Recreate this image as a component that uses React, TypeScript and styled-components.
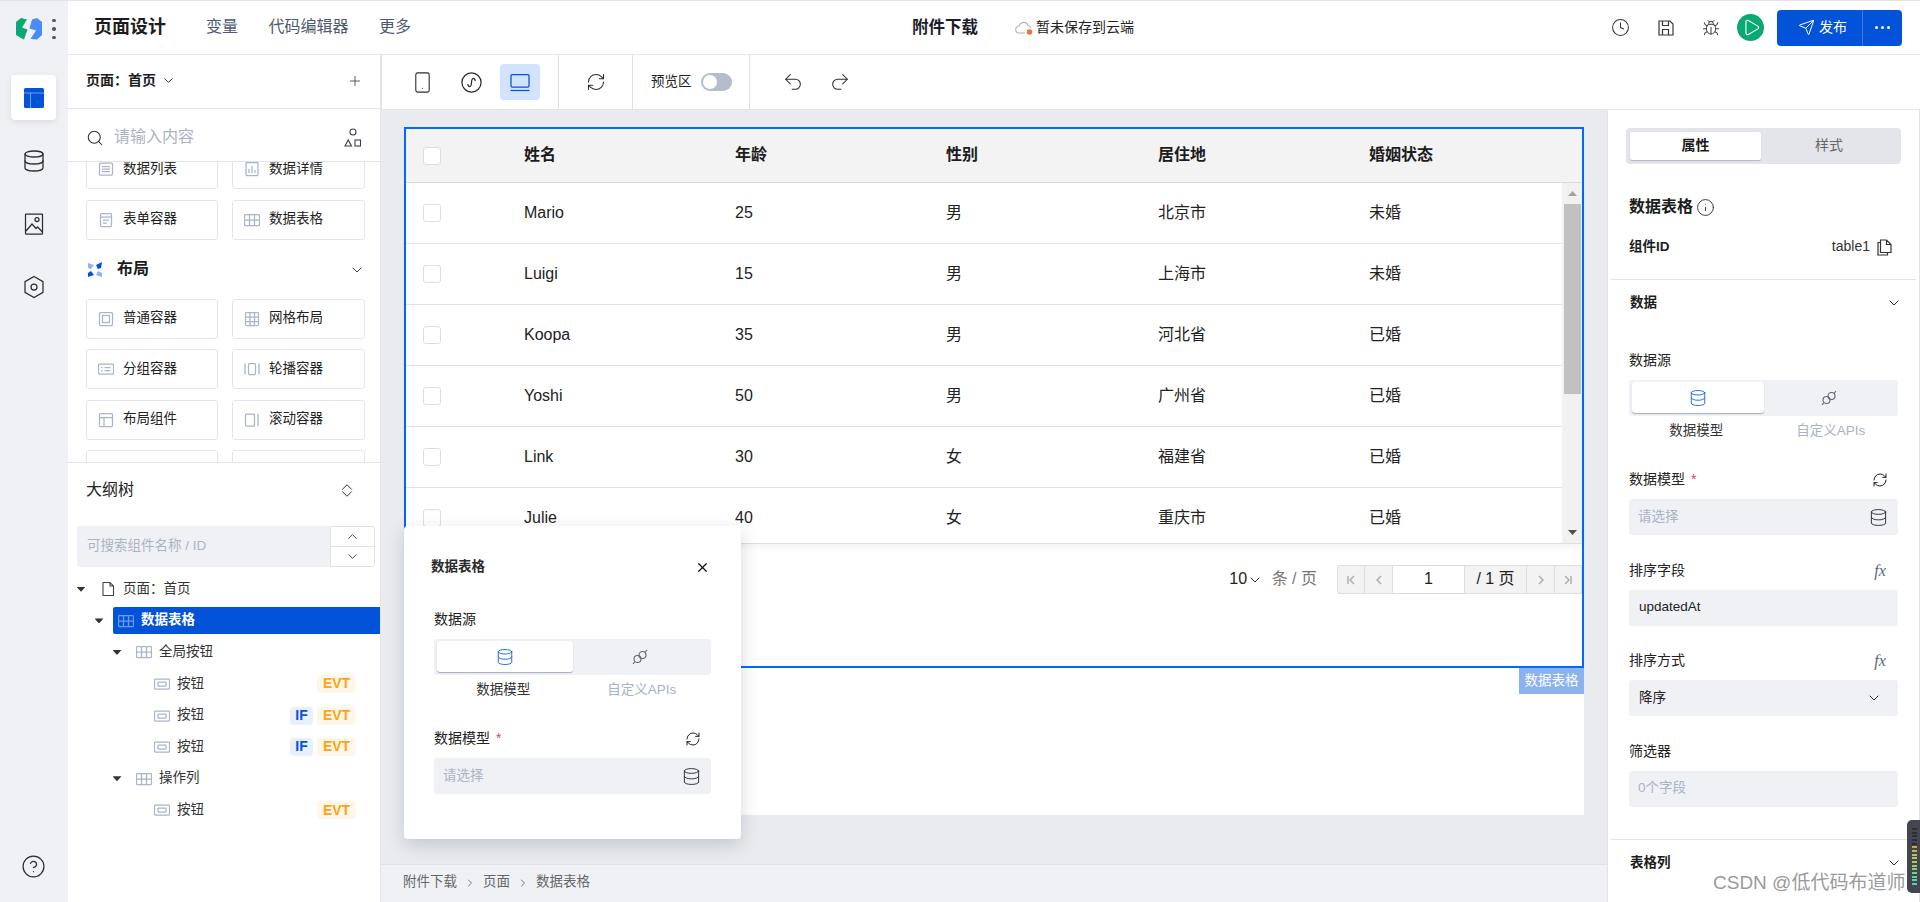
import React from 'react'
import styled, { createGlobalStyle } from 'styled-components'
import {
    Bug,
    ChevronDown,
    ChevronRight,
    ChevronUp,
    CircleHelp,
    Clock,
    Database,
    Info,
    Play,
    Plus,
    RefreshCw,
    Redo2,
    Search,
    Send,
    Smartphone,
    Undo2,
    X,
} from 'lucide-react'

const GlobalStyle = createGlobalStyle`
    html, body {
        margin: 0;
        height: 100%;
        background: #fff;
        font-family: "Liberation Sans", "Noto Sans CJK SC", sans-serif;
        line-height: 1.4;
        color: #1c1c1c;
    }
    * { box-sizing: border-box; }
`

const Root = styled.div`
    position: relative;
    display: flex;
    width: 1920px;
    height: 902px;
    overflow: hidden;
    border-top: 1px solid #e3e4e8;
`

const Rail = styled.aside`
    flex: 0 0 68px;
    display: flex;
    flex-direction: column;
    background: #f0f1f5;
`

const LogoRow = styled.div`
    height: 53px;
    padding: 3px 0 0 16px;
    display: flex;
    align-items: center;
    gap: 10px;
    margin-bottom: 21px;
`

const Dots = styled.div`
    display: flex;
    flex-direction: column;
    gap: 5px;
    i {
        width: 3.5px;
        height: 3.5px;
        border-radius: 50%;
        background: #4d5a70;
    }
`

const RailItem = styled.div<{ $active?: boolean }>`
    width: 45px;
    height: 45px;
    margin: 0 0 18px 11px;
    display: flex;
    align-items: center;
    justify-content: center;
    border-radius: 4px;
    background: ${(p) => (p.$active ? '#fff' : 'transparent')};
    box-shadow: ${(p) => (p.$active ? '0 2px 6px rgba(30, 40, 70, 0.1)' : 'none')};
    color: #2a2d34;
`

const RailHelp = styled(RailItem)`
    margin-top: auto;
    margin-bottom: 13px;
`

const Main = styled.div`
    flex: 1;
    min-width: 0;
    display: flex;
    flex-direction: column;
`

const Header = styled.header`
    flex: 0 0 54px;
    display: flex;
    align-items: center;
    border-bottom: 1px solid #e6e7eb;
`

const HeaderLeft = styled.div`
    flex: 0 0 844px;
    padding-left: 26px;
    display: flex;
    align-items: center;
`

const AppTitle = styled.div`
    font-size: 18px;
    font-weight: 700;
    margin-right: 40px;
`

const NavItem = styled.div`
    font-size: 16px;
    color: #4e5a6e;
    margin-right: 30.5px;
`

const DocTitle = styled.div`
    font-size: 16.5px;
    font-weight: 700;
    color: #1d1d2c;
    margin-right: 37px;
`

const SaveState = styled.div`
    display: flex;
    align-items: center;
    gap: 3px;
    font-size: 14px;
    color: #222;
`

const HeaderRight = styled.div`
    flex: 1;
    display: flex;
    align-items: center;
    justify-content: flex-end;
    padding-right: 18px;
`

const HeaderIcon = styled.div`
    width: 45px;
    display: flex;
    justify-content: center;
    color: #33363c;
`

const PlayButton = styled.div`
    width: 27px;
    height: 27px;
    margin: 0 13px 0 4px;
    padding-left: 1px;
    border-radius: 50%;
    background: #0aa974;
    color: #fff;
    display: flex;
    align-items: center;
    justify-content: center;
`

const PublishButton = styled.div`
    width: 125px;
    height: 36px;
    display: flex;
    border-radius: 4px;
    background: #0353da;
    color: #fff;
    font-size: 14px;
`

const PublishMain = styled.div`
    flex: 0 0 86px;
    display: flex;
    align-items: center;
    justify-content: center;
    gap: 4px;
    padding-left: 6px;
    border-right: 1px solid #3c7ae4;
`

const PublishMore = styled.div`
    flex: 1;
    display: flex;
    align-items: center;
    justify-content: center;
    gap: 3px;
    i {
        width: 3px;
        height: 3px;
        border-radius: 50%;
        background: #fff;
    }
`

const Body = styled.div`
    flex: 1;
    min-height: 0;
    display: flex;
`

const LeftPanel = styled.section`
    flex: 0 0 312px;
    display: flex;
    flex-direction: column;
    border-right: 1px solid #e3e4e8;
`

const PageRow = styled.div`
    flex: 0 0 54px;
    display: flex;
    align-items: center;
    padding: 0 17px 2px 18px;
    font-size: 14px;
    font-weight: 700;
    border-bottom: 1px solid #e3e4e8;
    svg:first-of-type { margin-left: 5px; }
    svg:last-child {
        margin-left: auto;
        color: #444;
    }
`

const SearchRow = styled.div`
    flex: 0 0 53px;
    display: flex;
    align-items: center;
    padding: 5px 18px 0 18px;
    gap: 10px;
    font-size: 16px;
    color: #aab3c6;
    border-bottom: 1px solid #e3e4e8;
    svg { color: #2c3038; }
    svg:last-child { margin-left: auto; }
`

const ComponentScroll = styled.div`
    flex: 0 0 300px;
    overflow: hidden;
    padding: 0 15px 0 18px;
`

const CardGrid = styled.div<{ $pull?: number }>`
    display: grid;
    grid-template-columns: 132px 133px;
    gap: 10.5px 14px;
    margin-top: ${(p) => p.$pull ?? 0}px;
`

const Card = styled.div`
    height: 40px;
    display: flex;
    align-items: center;
    gap: 9px;
    padding-left: 11px;
    border: 1px solid #e4e6ec;
    border-radius: 3px;
    font-size: 13.5px;
    color: #222;
`

const SectionHead = styled.div`
    height: 59px;
    display: flex;
    align-items: center;
    gap: 15px;
    padding: 1px 0 0 2px;
    font-size: 16px;
    font-weight: 700;
    svg:last-child { margin-left: auto; color: #333; }
`

const Outline = styled.div`
    flex: 1;
    border-top: 1px solid #e3e4e8;
`

const OutlineHead = styled.div`
    height: 54px;
    display: flex;
    align-items: center;
    justify-content: space-between;
    padding: 0 24px 0 18px;
    font-size: 16px;
    color: #222;
`

const ExpandToggle = styled.div`
    display: flex;
    flex-direction: column;
    color: #333;
    svg + svg { margin-top: -11px; }
`

const OutlineSearch = styled.div`
    margin: 9px 5px 0 9px;
    height: 41px;
    display: flex;
`

const OutlineInput = styled.div`
    flex: 1;
    display: flex;
    align-items: center;
    padding-left: 10px;
    background: #f0f1f5;
    border-radius: 3px 0 0 3px;
    font-size: 13.5px;
    color: #aab3c6;
`

const Stepper = styled.div`
    flex: 0 0 45px;
    display: flex;
    flex-direction: column;
    border: 1px solid #e2e2e2;
    border-radius: 0 3px 3px 0;
    div {
        flex: 1;
        display: flex;
        align-items: center;
        justify-content: center;
        color: #333;
    }
    div + div { border-top: 1px solid #e2e2e2; }
`

const Tree = styled.div`
    padding-top: 6.5px;
`

const TreeRow = styled.div<{ $level: number }>`
    height: 31.6px;
    display: flex;
    align-items: center;
    padding-left: ${(p) => 8.5 + p.$level * 18}px;
`

const Caret = styled.div<{ $hidden?: boolean }>`
    flex: 0 0 9px;
    width: 9px;
    height: 5px;
    margin-right: 9.5px;
    clip-path: polygon(0 0, 100% 0, 50% 100%);
    background: ${(p) => (p.$hidden ? 'transparent' : '#333')};
`

const TreeLabel = styled.div<{ $selected?: boolean }>`
    flex: 1;
    height: 27px;
    display: flex;
    align-items: center;
    gap: 7px;
    padding-left: 5px;
    font-size: 13.5px;
    font-weight: ${(p) => (p.$selected ? 700 : 400)};
    color: ${(p) => (p.$selected ? '#fff' : '#333')};
    background: ${(p) => (p.$selected ? '#0353da' : 'transparent')};
    border-radius: 2px 0 0 2px;
`

const BadgeRow = styled.div`
    margin-left: auto;
    margin-right: 24px;
    display: flex;
    gap: 4px;
`

const Badge = styled.span<{ $kind: 'if' | 'evt' }>`
    width: ${(p) => (p.$kind === 'if' ? 23 : 39)}px;
    height: 18px;
    display: flex;
    align-items: center;
    justify-content: center;
    border-radius: 4px;
    font-size: 14px;
    font-weight: 700;
    color: ${(p) => (p.$kind === 'if' ? '#0353da' : '#ffa30f')};
    background: ${(p) => (p.$kind === 'if' ? '#e8f0fd' : '#fff6ea')};
`

const Work = styled.div`
    flex: 1;
    min-width: 0;
    display: flex;
    flex-direction: column;
`

const Toolbar = styled.div`
    flex: 0 0 54px;
    display: flex;
`

const ToolGroup = styled.div<{ $width: number }>`
    flex: 0 0 ${(p) => p.$width}px;
    display: flex;
    align-items: center;
    border-right: 1px solid #dfe1e6;
`

const DeviceGroup = styled(ToolGroup)`
    padding-left: 20px;
    gap: 9px;
    border-left: 1px solid #dfe1e6;
`

const HistoryGroup = styled.div`
    flex: 1;
    display: flex;
    align-items: center;
    padding-left: 19px;
`

const ToolButton = styled.div<{ $active?: boolean; $w?: number }>`
    width: ${(p) => p.$w ?? 40}px;
    height: 36px;
    display: flex;
    align-items: center;
    justify-content: center;
    border-radius: 4px;
    background: ${(p) => (p.$active ? '#d4e3fc' : 'transparent')};
    color: ${(p) => (p.$active ? '#0353da' : '#2a2c33')};
`

const PreviewLabel = styled.div`
    margin-left: 18px;
    font-size: 13.5px;
    margin-right: 9px;
    color: #222;
`

const Toggle = styled.div`
    width: 31px;
    height: 18px;
    padding: 2px;
    border-radius: 9px;
    background: #b5bccb;
    i {
        display: block;
        width: 14px;
        height: 14px;
        border-radius: 50%;
        background: #fff;
    }
`

const WorkBody = styled.div`
    flex: 1;
    min-height: 0;
    display: flex;
`

const CanvasColumn = styled.div`
    flex: 0 0 1226px;
    display: flex;
    flex-direction: column;
`

const Canvas = styled.div`
    position: relative;
    flex: 1;
    padding: 17px 23px 49px;
    background: #e9ebef;
    border-top: 1px solid #e3e4e8;
`

const Page = styled.div`
    height: 100%;
    background: #fff;
`

const Selected = styled.div`
    position: relative;
    height: 541px;
    border: 2px solid #0069ff;
`

const SelectedTag = styled.div`
    position: absolute;
    top: 100%;
    right: -2px;
    margin-top: 2px;
    width: 65px;
    height: 26px;
    display: flex;
    align-items: center;
    justify-content: center;
    background: #8cb1ef;
    color: #fff;
    font-size: 13.5px;
`

const columns = '118px 211px 211px 212px 211px 1fr'

const TableHead = styled.div`
    height: 54px;
    display: grid;
    grid-template-columns: ${columns};
    align-items: center;
    background: #f3f3f3;
    border-bottom: 1px solid #dcdcdc;
    font-size: 16px;
    font-weight: 700;
`

const TableBody = styled.div`
    height: 361px;
    display: flex;
    overflow: hidden;
    border-bottom: 1px solid #dedede;
    box-shadow: 0 3px 6px rgba(0, 0, 0, 0.05);
`

const TableRows = styled.div`
    flex: 1;
`

const TableRow = styled.div`
    height: 61px;
    display: grid;
    grid-template-columns: ${columns};
    align-items: center;
    border-bottom: 1px solid #e2e2e2;
    font-size: 16px;
    color: #222;
`

const Check = styled.div`
    width: 18px;
    height: 18px;
    margin-left: 17px;
    background: #fff;
    border: 1px solid #dedede;
    border-radius: 3px;
`

const ScrollTrack = styled.div`
    flex: 0 0 20px;
    display: flex;
    flex-direction: column;
    padding: 0 1px 0 2px;
    background: #f1f1f1;
`

const ScrollArrow = styled.div<{ $down?: boolean }>`
    flex: 0 0 21px;
    display: flex;
    align-items: center;
    justify-content: center;
    margin-top: ${(p) => (p.$down ? 'auto' : 0)};
    &::after {
        content: '';
        width: 9px;
        height: 5px;
        background: ${(p) => (p.$down ? '#505050' : '#a3a3a3')};
        clip-path: ${(p) =>
            p.$down
                ? 'polygon(0 0, 100% 0, 50% 100%)'
                : 'polygon(50% 0, 100% 100%, 0 100%)'};
    }
`

const ScrollThumb = styled.div`
    height: 190px;
    background: #c1c1c1;
`

const Pager = styled.div`
    height: 50px;
    padding-top: 21px;
    display: flex;
    justify-content: flex-end;
    align-items: flex-start;
`

const PageSize = styled.div`
    height: 29px;
    display: flex;
    align-items: center;
    font-size: 16px;
    color: #222;
    margin-right: 20px;
    svg { margin: 0 8.5px 0 0; color: #333; }
    span { color: #777; }
`

const PagerBox = styled.div`
    height: 29px;
    display: flex;
    border: 1px solid #dedede;
    border-right: 0;
    border-radius: 3px 0 0 3px;
    background: #f3f3f3;
`

const PagerCell = styled.div<{ $w: number; $white?: boolean }>`
    width: ${(p) => p.$w}px;
    display: flex;
    align-items: center;
    justify-content: center;
    border-right: 1px solid #dedede;
    font-size: 16px;
    color: #222;
    background: ${(p) => (p.$white ? '#fff' : 'transparent')};
    svg { color: #aaa; }
`

const Breadcrumb = styled.div`
    flex: 0 0 38px;
    display: flex;
    align-items: center;
    gap: 7px;
    padding: 0 0 2px 22px;
    background: #f0f1f5;
    border-top: 1px solid #dfe1e6;
    font-size: 13.5px;
    color: #666;
    svg { color: #777; }
`

const Popup = styled.div`
    position: absolute;
    left: 23px;
    top: 416px;
    width: 337px;
    height: 313px;
    padding: 0 30px;
    background: #fff;
    border-radius: 4px;
    box-shadow: 0 6px 18px rgba(30, 40, 60, 0.18);
`

const PopupHead = styled.div`
    height: 83px;
    margin-left: -3px;
    display: flex;
    align-items: center;
    justify-content: space-between;
    font-size: 13.5px;
    font-weight: 700;
    color: #2a2a2a;
    svg { color: #111; margin-right: 1px; }
`

const LabelRow = styled.div`
    height: 20px;
    margin-bottom: 10px;
    padding-top: 2px;
    display: flex;
    align-items: center;
    justify-content: space-between;
    font-size: 14px;
    color: #222;
    em {
        font-style: normal;
        color: #d9455f;
        margin-left: 6px;
    }
`

const LabelAction = styled.div`
    width: 16px;
    margin-right: 10px;
    display: flex;
    justify-content: center;
    color: #111;
`

const Fx = styled.span`
    font-family: "Liberation Serif", serif;
    font-style: italic;
    font-size: 16px;
    line-height: 18px;
    color: #5a6679;
`

const Segment = styled.div`
    height: 36px;
    padding: 2px 3px 3px;
    display: grid;
    grid-template-columns: 1fr 1fr;
    background: #f0f1f5;
    border-radius: 3px;
`

const SegmentItem = styled.div<{ $active?: boolean }>`
    display: flex;
    align-items: center;
    justify-content: center;
    border-radius: 3px;
    background: ${(p) => (p.$active ? '#fff' : 'transparent')};
    box-shadow: ${(p) => (p.$active ? '0 1px 1px rgba(60, 70, 110, 0.4)' : 'none')};
    color: ${(p) => (p.$active ? '#0f62e6' : '#5c6577')};
`

const SegmentCaptions = styled.div`
    height: 20px;
    margin: 5px 0 28px;
    display: grid;
    grid-template-columns: 1fr 1fr;
    text-align: center;
    font-size: 13.5px;
    line-height: 20px;
    color: #333;
    span + span { color: #aab3c6; }
`

const InputBox = styled.div<{ $muted?: boolean }>`
    height: 36px;
    display: flex;
    align-items: center;
    justify-content: space-between;
    padding: 0 10px 0 ${(p) => (p.$muted ? 9 : 10)}px;
    background: #f0f1f5;
    border-radius: 3px;
    font-size: 13.5px;
    color: ${(p) => (p.$muted ? '#aab3c6' : '#222')};
    svg { color: #2a2c33; }
`

const SelectChevron = styled(ChevronDown)`
    margin-right: 6px;
`

const Field = styled.div`
    margin-bottom: 24.5px;
`

const RightPanel = styled.aside`
    flex: 1;
    display: flex;
    flex-direction: column;
    overflow: hidden;
    border-left: 1px solid #e3e4e8;
    border-right: 1px solid #e3e4e8;
    border-top: 1px solid #e3e4e8;
`

const TabBar = styled.div`
    flex: 0 0 36px;
    margin: 18px 18px 0 18px;
    padding: 4px;
    display: grid;
    grid-template-columns: 131px 1fr;
    background: #e3e5ea;
    border-radius: 4px;
`

const Tab = styled.div<{ $active?: boolean }>`
    display: flex;
    align-items: center;
    justify-content: center;
    font-size: 14px;
    font-weight: ${(p) => (p.$active ? 700 : 400)};
    color: ${(p) => (p.$active ? '#1c1c1c' : '#666')};
    background: ${(p) => (p.$active ? '#fff' : 'transparent')};
    border-radius: 2px;
    box-shadow: ${(p) => (p.$active ? '0 1px 1px rgba(60, 70, 110, 0.3)' : 'none')};
`

const PanelTitle = styled.div`
    margin: 31px 21px 0 21px;
    height: 24px;
    display: flex;
    align-items: center;
    gap: 3px;
    font-size: 16px;
    font-weight: 700;
    svg { color: #333; }
`

const IdRow = styled.div`
    margin: 16px 27px 0 21px;
    height: 24px;
    display: flex;
    align-items: center;
    font-size: 13.5px;
    font-weight: 700;
    span {
        margin-left: auto;
        margin-right: 7px;
        font-size: 14px;
        font-weight: 400;
        color: #333;
    }
`

const Divider = styled.div`
    height: 1px;
    margin: 20px 3px 0;
    background: #e3e4e8;
`

const CollapseHead = styled.div`
    height: 46px;
    display: flex;
    align-items: center;
    justify-content: space-between;
    padding: 0 17px 0 22px;
    font-size: 13.5px;
    font-weight: 700;
    svg { color: #333; }
`

const FieldArea = styled.div`
    padding: 24px 21px 0 21px;
`

const FilterDivider = styled(Divider)`
    margin-top: 8px;
`

const Watermark = styled.div`
    position: absolute;
    left: 1713px;
    top: 869px;
    font-size: 19px;
    white-space: nowrap;
    color: #9a9a9a;
`

const Meter = styled.div`
    position: absolute;
    right: 0;
    top: 819px;
    width: 13px;
    height: 73px;
    padding: 8px 3px 8px 5px;
    display: flex;
    flex-direction: column;
    gap: 1.5px;
    background: #43464f;
    border-radius: 5px 0 0 5px;
    i {
        flex: 1;
        background: #2f3037;
    }
`

const MeterBar = styled.i<{ $c: string }>`
    && { background: ${(p) => p.$c}; }
`

const GlyphSvg = styled.svg`
    flex: 0 0 16px;
`

// small grey drawings used by the component cards and the tree
const glyphs: Record<string, React.ReactNode> = {
    list: (<><rect x="1.5" y="2" width="13" height="12" rx="1" /><path d="M4 5.5h8M4 8h8M4 10.5h8" /></>),
    chart: (<><rect x="2" y="1.5" width="12" height="13" rx="1" /><path d="M5 12V8M8 12V5M11 12V9" /></>),
    form: (<><rect x="2.5" y="1.5" width="11" height="13" rx="1" /><path d="M2.5 5h11M5 8h6M5 11h4" /></>),
    table: (<><rect x="0.5" y="2.5" width="15" height="11" rx="1" /><path d="M0.5 8h15M5.5 2.5v11M10.5 2.5v11" /></>),
    box: (<><rect x="1.5" y="1.5" width="13" height="13" rx="1" /><rect x="4.5" y="4.5" width="7" height="7" /></>),
    grid: (<><rect x="1.5" y="1.5" width="13" height="13" rx="1" /><path d="M1.5 6h13M1.5 10.5h13M6 1.5v13M10.5 1.5v13" /></>),
    group: (<><rect x="0.5" y="3" width="15" height="10" rx="1" /><path d="M3 6.5h1.5M6.5 6.5h6M3 9.5h1.5M6.5 9.5h6" /></>),
    carousel: (<><rect x="4.5" y="2.5" width="7" height="11" rx="1" /><path d="M1 2.5v11M15 2.5v11" /></>),
    layout: (<><rect x="1.5" y="1.5" width="13" height="13" rx="1" /><path d="M1.5 5.5h13M6 5.5v9" /></>),
    scroll: (<><rect x="1.5" y="2" width="9" height="12" rx="1" /><path d="M14 2v12" /></>),
    button: (<><rect x="0.5" y="3" width="15" height="10" rx="1" /><rect x="4" y="6" width="8" height="4" rx="0.5" /></>),
}

function Glyph({ name, color = '#aab5c9' }: { name: string; color?: string }) {
    return (
        <GlyphSvg width={16} height={16} viewBox="0 0 16 16" fill="none" stroke={color} strokeWidth={1.25}>
            {glyphs[name]}
        </GlyphSvg>
    )
}

function Logo() {
    return (
        <svg width={26} height={22} viewBox="0 0 26 22">
            <polygon points="5,0 11,1.5 6,9.5 11.5,11.5 8,21.5 5,20 0,17 0,4" fill="#0aa974" />
            <polygon points="16,1.5 21,0 26,4 26,17 21,21.5 14.5,21 20,12.5 13.5,10.5" fill="#4a8cf6" />
        </svg>
    )
}

function LayoutSectionIcon() {
    return (
        <svg width={14} height={16} viewBox="0 0 14 16">
            <polygon points="0,1 6,3 3,7 0,6" fill="#8db4f5" />
            <polygon points="14,0 13,6 10,7 8,3" fill="#0353da" />
            <polygon points="3,9 6,13 0,15 0,11" fill="#0353da" />
            <polygon points="10,9 14,11 14,15 8,13" fill="#8db4f5" />
        </svg>
    )
}

function MiniProgram() {
    return (
        <svg width={21} height={21} viewBox="0 0 21 21" fill="none" stroke="#2a2c33" strokeWidth={1.25}>
            <circle cx="10.5" cy="10.5" r="9.6" />
            <path d="M6.8 12c0 2 1.400 3 2.600 2.200 1.100-.7 1.100-2.200 1.100-3.700s0-3 1.100-3.700c1.200-.8 2.600.2 2.600 2.200" />
        </svg>
    )
}

function LaptopIcon() {
    return (
        <svg width={20} height={19} viewBox="0 0 20 19" fill="none" stroke="#0353da" strokeWidth={1.25}>
            <rect x="1" y="1.500" width="18" height="12.500" rx="1" />
            <path d="M0.500 17.500h19" />
        </svg>
    )
}

function ImageIcon() {
    return (
        <svg width={20} height={24} viewBox="0 0 20 24" fill="none" stroke="#2a2d34" strokeWidth={1.25}>
            <rect x="1.500" y="2" width="17" height="20" rx="0.500" />
            <circle cx="13" cy="7.500" r="2" />
            <path d="M2 19l6-7 4 4.500 1.500-1.500 5 5" />
        </svg>
    )
}

function HexIcon() {
    return (
        <svg width={22} height={24} viewBox="0 0 22 24" fill="none" stroke="#2a2d34" strokeWidth={1.25}>
            <path d="M11 1.500l9 5.200v10.600l-9 5.200-9-5.200V6.700z" />
            <circle cx="11" cy="12" r="3" />
        </svg>
    )
}

function ShapesIcon() {
    return (
        <svg width={18} height={20} viewBox="0 0 18 20" fill="none" stroke="#3a4050" strokeWidth={1.1}>
            <circle cx="9" cy="4" r="3" />
            <path d="M1 18l3.200-6 3.300 6z" />
            <rect x="11" y="12" width="5.500" height="6" />
        </svg>
    )
}

function LinkIcon() {
    return (
        <svg width={16} height={16} viewBox="0 0 16 16" fill="none" stroke="currentColor" strokeWidth={1.1}>
            <circle cx="5.500" cy="10" r="3.500" />
            <circle cx="10.500" cy="6" r="3.500" />
            <path d="M1 15l2-2.500M13 3.500L15 1" />
        </svg>
    )
}

function CloudDot() {
    return (
        <svg width={18} height={16} viewBox="0 0 18 16" fill="none">
            <path d="M5 13H4.500A3.500 3.500 0 0 1 4 6a4.800 4.800 0 0 1 9-.8A3.600 3.600 0 0 1 15.500 8" stroke="#aab3c6" strokeWidth={1.1} />
            <path d="M5 13h5" stroke="#aab3c6" strokeWidth={1.1} />
            <circle cx="14.500" cy="12" r="2.800" fill="#ef7436" />
        </svg>
    )
}

function SaveIcon() {
    return (
        <svg width={16} height={16} viewBox="0 0 16 16" fill="none" stroke="#33363c" strokeWidth={1.2}>
            <path d="M1 1h11l3 3v11H1z" />
            <path d="M4.500 1v4.500h6V1M4.500 15V9.500h6V15" />
        </svg>
    )
}

function CopyIcon() {
    return (
        <svg width={15} height={17} viewBox="0 0 15 17" fill="none" stroke="#333" strokeWidth={1.2}>
            <path d="M3.500 1h6l4.500 4.500V13.500h-10.500zM9.500 1v4.500H14" />
            <path d="M3.500 3.500H1V16h9.500v-2.500" />
        </svg>
    )
}

function PagerArrow({ d }: { d: string }) {
    return (
        <svg width={12} height={12} viewBox="0 0 12 12" fill="none" stroke="currentColor" strokeWidth={1.4}>
            <path d={d} />
        </svg>
    )
}

const leftTopCards = [
    ['list', '数据列表'],
    ['chart', '数据详情'],
    ['form', '表单容器'],
    ['table', '数据表格'],
]

const layoutCards = [
    ['box', '普通容器'],
    ['grid', '网格布局'],
    ['group', '分组容器'],
    ['carousel', '轮播容器'],
    ['layout', '布局组件'],
    ['scroll', '滚动容器'],
]

const people = [
    ['Mario', '25', '男', '北京市', '未婚'],
    ['Luigi', '15', '男', '上海市', '未婚'],
    ['Koopa', '35', '男', '河北省', '已婚'],
    ['Yoshi', '50', '男', '广州省', '已婚'],
    ['Link', '30', '女', '福建省', '已婚'],
    ['Julie', '40', '女', '重庆市', '已婚'],
]

const meterColors = [
    '', '', '', '', '',
    '#c9a94a', '#c9b04f', '#c6bb55', '#b9c35c', '#a9c765',
    '#9acb6d', '#8acd78', '#79cf86', '#69d095', '#5cd1a6', '#52d2b4',
]

function DataSourceFields() {
    return (
        <>
            <LabelRow>数据源</LabelRow>
            <Segment>
                <SegmentItem $active>
                    <Database size={18} strokeWidth={1.2} />
                </SegmentItem>
                <SegmentItem>
                    <LinkIcon />
                </SegmentItem>
            </Segment>
            <SegmentCaptions>
                <span>数据模型</span>
                <span>自定义APIs</span>
            </SegmentCaptions>
            <Field>
                <LabelRow>
                    <div>
                        数据模型<em>*</em>
                    </div>
                    <LabelAction>
                        <RefreshCw size={18} strokeWidth={1.4} />
                    </LabelAction>
                </LabelRow>
                <InputBox $muted>
                    请选择
                    <Database size={19} strokeWidth={1.2} />
                </InputBox>
            </Field>
        </>
    )
}

export default function App() {
    return (
        <Root>
            <GlobalStyle />
            <Rail>
                <LogoRow>
                    <Logo />
                    <Dots>
                        <i />
                        <i />
                        <i />
                    </Dots>
                </LogoRow>
                <RailItem $active>
                    <svg width={20} height={20} viewBox="0 0 20 20">
                        <rect x="0" y="0" width="20" height="20" rx="1.500" fill="#0353da" />
                        <path d="M0 5h20M6.500 5v15" stroke="#6d9cec" strokeWidth={1.1} />
                    </svg>
                </RailItem>
                <RailItem>
                    <Database size={24} strokeWidth={1.3} />
                </RailItem>
                <RailItem>
                    <ImageIcon />
                </RailItem>
                <RailItem>
                    <HexIcon />
                </RailItem>
                <RailHelp>
                    <CircleHelp size={25} strokeWidth={1.2} />
                </RailHelp>
            </Rail>
            <Main>
                <Header>
                    <HeaderLeft>
                        <AppTitle>页面设计</AppTitle>
                        <NavItem>变量</NavItem>
                        <NavItem>代码编辑器</NavItem>
                        <NavItem>更多</NavItem>
                    </HeaderLeft>
                    <DocTitle>附件下载</DocTitle>
                    <SaveState>
                        <CloudDot />
                        暂未保存到云端
                    </SaveState>
                    <HeaderRight>
                        <HeaderIcon>
                            <Clock size={19} strokeWidth={1.3} />
                        </HeaderIcon>
                        <HeaderIcon>
                            <SaveIcon />
                        </HeaderIcon>
                        <HeaderIcon>
                            <Bug size={18} strokeWidth={1.3} />
                        </HeaderIcon>
                        <PlayButton>
                            <Play size={19} strokeWidth={1.4} />
                        </PlayButton>
                        <PublishButton>
                            <PublishMain>
                                <Send size={17} strokeWidth={1.4} />
                                发布
                            </PublishMain>
                            <PublishMore>
                                <i />
                                <i />
                                <i />
                            </PublishMore>
                        </PublishButton>
                    </HeaderRight>
                </Header>
                <Body>
                    <LeftPanel>
                        <PageRow>
                            页面：首页
                            <ChevronDown size={15} strokeWidth={1.4} />
                            <Plus size={16} strokeWidth={1.3} />
                        </PageRow>
                        <SearchRow>
                            <Search size={18} strokeWidth={1.4} />
                            请输入内容
                            <ShapesIcon />
                        </SearchRow>
                        <ComponentScroll>
                            <CardGrid $pull={-13}>
                                {leftTopCards.map(([icon, text]) => (
                                    <Card key={text}>
                                        <Glyph name={icon} />
                                        {text}
                                    </Card>
                                ))}
                            </CardGrid>
                            <SectionHead>
                                <LayoutSectionIcon />
                                布局
                                <ChevronDown size={16} strokeWidth={1.4} />
                            </SectionHead>
                            <CardGrid>
                                {layoutCards.map(([icon, text]) => (
                                    <Card key={text}>
                                        <Glyph name={icon} />
                                        {text}
                                    </Card>
                                ))}
                                <Card />
                                <Card />
                            </CardGrid>
                        </ComponentScroll>
                        <Outline>
                            <OutlineHead>
                                大纲树
                                <ExpandToggle>
                                    <ChevronUp size={18} strokeWidth={1.3} />
                                    <ChevronDown size={18} strokeWidth={1.3} />
                                </ExpandToggle>
                            </OutlineHead>
                            <OutlineSearch>
                                <OutlineInput>可搜索组件名称 / ID</OutlineInput>
                                <Stepper>
                                    <div>
                                        <ChevronUp size={15} strokeWidth={1.4} />
                                    </div>
                                    <div>
                                        <ChevronDown size={15} strokeWidth={1.4} />
                                    </div>
                                </Stepper>
                            </OutlineSearch>
                            <Tree>
                                <TreeRow $level={0}>
                                    <Caret />
                                    <TreeLabel>
                                        <svg width={16} height={16} viewBox="0 0 16 16" fill="none" stroke="#444" strokeWidth={1.1}>
                                            <path d="M3 1.500h7l3.500 3.500v9.500H3zM10 1.500V5h3.500" />
                                        </svg>
                                        页面：首页
                                    </TreeLabel>
                                </TreeRow>
                                <TreeRow $level={1}>
                                    <Caret />
                                    <TreeLabel $selected>
                                        <Glyph name="table" color="#6d9cec" />
                                        数据表格
                                    </TreeLabel>
                                </TreeRow>
                                <TreeRow $level={2}>
                                    <Caret />
                                    <TreeLabel>
                                        <Glyph name="table" />
                                        全局按钮
                                    </TreeLabel>
                                </TreeRow>
                                <TreeRow $level={3}>
                                    <Caret $hidden />
                                    <TreeLabel>
                                        <Glyph name="button" />
                                        按钮
                                        <BadgeRow>
                                            <Badge $kind="evt">EVT</Badge>
                                        </BadgeRow>
                                    </TreeLabel>
                                </TreeRow>
                                <TreeRow $level={3}>
                                    <Caret $hidden />
                                    <TreeLabel>
                                        <Glyph name="button" />
                                        按钮
                                        <BadgeRow>
                                            <Badge $kind="if">IF</Badge>
                                            <Badge $kind="evt">EVT</Badge>
                                        </BadgeRow>
                                    </TreeLabel>
                                </TreeRow>
                                <TreeRow $level={3}>
                                    <Caret $hidden />
                                    <TreeLabel>
                                        <Glyph name="button" />
                                        按钮
                                        <BadgeRow>
                                            <Badge $kind="if">IF</Badge>
                                            <Badge $kind="evt">EVT</Badge>
                                        </BadgeRow>
                                    </TreeLabel>
                                </TreeRow>
                                <TreeRow $level={2}>
                                    <Caret />
                                    <TreeLabel>
                                        <Glyph name="table" />
                                        操作列
                                    </TreeLabel>
                                </TreeRow>
                                <TreeRow $level={3}>
                                    <Caret $hidden />
                                    <TreeLabel>
                                        <Glyph name="button" />
                                        按钮
                                        <BadgeRow>
                                            <Badge $kind="evt">EVT</Badge>
                                        </BadgeRow>
                                    </TreeLabel>
                                </TreeRow>
                            </Tree>
                        </Outline>
                    </LeftPanel>
                    <Work>
                        <Toolbar>
                            <DeviceGroup $width={178}>
                                <ToolButton>
                                    <Smartphone size={23} strokeWidth={1.15} />
                                </ToolButton>
                                <ToolButton>
                                    <MiniProgram />
                                </ToolButton>
                                <ToolButton $active>
                                    <LaptopIcon />
                                </ToolButton>
                            </DeviceGroup>
                            <ToolGroup $width={74}>
                                <ToolButton $w={73}>
                                    <RefreshCw size={20} strokeWidth={1.25} />
                                </ToolButton>
                            </ToolGroup>
                            <ToolGroup $width={117}>
                                <PreviewLabel>预览区</PreviewLabel>
                                <Toggle>
                                    <i />
                                </Toggle>
                            </ToolGroup>
                            <HistoryGroup>
                                <ToolButton $w={47}>
                                    <Undo2 size={22} strokeWidth={1.15} />
                                </ToolButton>
                                <ToolButton $w={47}>
                                    <Redo2 size={22} strokeWidth={1.15} />
                                </ToolButton>
                            </HistoryGroup>
                        </Toolbar>
                        <WorkBody>
                            <CanvasColumn>
                                <Canvas>
                                    <Page>
                                        <Selected>
                                            <TableHead>
                                                <Check />
                                                <div>姓名</div>
                                                <div>年龄</div>
                                                <div>性别</div>
                                                <div>居住地</div>
                                                <div>婚姻状态</div>
                                            </TableHead>
                                            <TableBody>
                                                <TableRows>
                                                    {people.map((row) => (
                                                        <TableRow key={row[0]}>
                                                            <Check />
                                                            {row.map((cell, i) => (
                                                                <div key={i}>{cell}</div>
                                                            ))}
                                                        </TableRow>
                                                    ))}
                                                </TableRows>
                                                <ScrollTrack>
                                                    <ScrollArrow />
                                                    <ScrollThumb />
                                                    <ScrollArrow $down />
                                                </ScrollTrack>
                                            </TableBody>
                                            <Pager>
                                                <PageSize>
                                                    10
                                                    <ChevronDown size={16} strokeWidth={1.5} />
                                                    <span>条 / 页</span>
                                                </PageSize>
                                                <PagerBox>
                                                    <PagerCell $w={27}>
                                                        <PagerArrow d="M3 2v8M9 2L5 6l4 4" />
                                                    </PagerCell>
                                                    <PagerCell $w={28}>
                                                        <PagerArrow d="M8 2L4 6l4 4" />
                                                    </PagerCell>
                                                    <PagerCell $w={72} $white>
                                                        1
                                                    </PagerCell>
                                                    <PagerCell $w={62}>/ 1 页</PagerCell>
                                                    <PagerCell $w={28}>
                                                        <PagerArrow d="M4 2l4 4-4 4" />
                                                    </PagerCell>
                                                    <PagerCell $w={27}>
                                                        <PagerArrow d="M9 2v8M3 2l4 4-4 4" />
                                                    </PagerCell>
                                                </PagerBox>
                                            </Pager>
                                            <SelectedTag>数据表格</SelectedTag>
                                        </Selected>
                                    </Page>
                                    <Popup>
                                        <PopupHead>
                                            数据表格
                                            <X size={15} strokeWidth={2} />
                                        </PopupHead>
                                        <DataSourceFields />
                                    </Popup>
                                </Canvas>
                                <Breadcrumb>
                                    附件下载
                                    <ChevronRight size={12} />
                                    页面
                                    <ChevronRight size={12} />
                                    数据表格
                                </Breadcrumb>
                            </CanvasColumn>
                            <RightPanel>
                                <TabBar>
                                    <Tab $active>属性</Tab>
                                    <Tab>样式</Tab>
                                </TabBar>
                                <PanelTitle>
                                    数据表格
                                    <Info size={19} strokeWidth={1.2} />
                                </PanelTitle>
                                <IdRow>
                                    组件ID
                                    <span>table1</span>
                                    <CopyIcon />
                                </IdRow>
                                <Divider />
                                <CollapseHead>
                                    数据
                                    <ChevronDown size={16} strokeWidth={1.5} />
                                </CollapseHead>
                                <FieldArea>
                                    <DataSourceFields />
                                    <Field>
                                        <LabelRow>
                                            排序字段
                                            <LabelAction>
                                                <Fx>fx</Fx>
                                            </LabelAction>
                                        </LabelRow>
                                        <InputBox>updatedAt</InputBox>
                                    </Field>
                                    <Field>
                                        <LabelRow>
                                            排序方式
                                            <LabelAction>
                                                <Fx>fx</Fx>
                                            </LabelAction>
                                        </LabelRow>
                                        <InputBox>
                                            降序
                                            <SelectChevron size={16} strokeWidth={1.5} />
                                        </InputBox>
                                    </Field>
                                    <Field>
                                        <LabelRow>筛选器</LabelRow>
                                        <InputBox $muted>0个字段</InputBox>
                                    </Field>
                                </FieldArea>
                                <FilterDivider />
                                <CollapseHead>
                                    表格列
                                    <ChevronDown size={16} strokeWidth={1.5} />
                                </CollapseHead>
                            </RightPanel>
                        </WorkBody>
                    </Work>
                </Body>
            </Main>
            <Watermark>CSDN @低代码布道师</Watermark>
            <Meter>
                {meterColors.map((c, i) => (c ? <MeterBar key={i} $c={c} /> : <i key={i} />))}
            </Meter>
        </Root>
    )
}
